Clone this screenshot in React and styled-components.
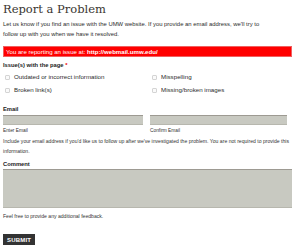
import styled, { createGlobalStyle } from "styled-components";

const Global = createGlobalStyle`
  html, body { margin: 0; padding: 0; background: #fff; }
  body { font-family: "Liberation Sans", Arial, sans-serif; color: #333; }
`;

const Page = styled.div`
  width: 300px;
  height: 247px;
  box-sizing: border-box;
  padding: 2px 8px 0 3px;
  overflow: hidden;
`;

const Title = styled.h1`
  margin: 0;
  font-family: "DejaVu Serif", "Liberation Serif", serif;
  font-weight: normal;
  font-size: 11.5px;
  line-height: 15px;
  color: #3a3530;
`;

const Intro = styled.p`
  margin: 2px 0 0;
  font-size: 5.9px;
  line-height: 10px;
  color: #2b2b2b;
`;

const Alert = styled.div`
  margin-top: 7px;
  height: 11px;
  box-sizing: border-box;
  background: #ff0000;
  border: 1px solid #f06060;
  color: #fff;
  font-size: 6.1px;
  line-height: 9px;
  padding-left: 2px;
  b { font-weight: bold; }
`;

const Label = styled.div`
  font-size: 5.8px;
  font-weight: bold;
  line-height: 8px;
  color: #222;
  margin-top: ${(p) => p.$top}px;
  span { color: #e00; }
`;

const Checks = styled.div`
  display: grid;
  grid-template-columns: 147px 1fr;
  row-gap: 5px;
  margin-top: 4px;
`;

const Check = styled.label`
  display: flex;
  align-items: center;
  gap: 4px;
  font-size: 6.2px;
  line-height: 8px;
  color: #2b2b2b;
  padding-left: 2px;
`;

const Box = styled.span`
  width: 5px;
  height: 5px;
  box-sizing: border-box;
  border: 1px solid #d4d4d4;
  border-radius: 1px;
  background: #fafafa;
`;

const Row = styled.div`
  display: grid;
  grid-template-columns: 140px 137px;
  column-gap: 7px;
  margin-top: 2px;
`;

const Field = styled.div`
  display: flex;
  flex-direction: column;
`;

const Input = styled.div`
  height: 10px;
  box-sizing: border-box;
  background: #c8c9c1;
  border-top: 1px solid #9d9a92;
  border-bottom: 1px solid #b7b7ae;
`;

const Area = styled.div`
  margin-top: 1px;
  height: 39px;
  width: 289px;
  box-sizing: border-box;
  background: #c8c9c1;
  border-top: 1px solid #9d9a92;
  border-bottom: 1px solid #b7b7ae;
`;

const Hint = styled.div`
  font-size: 4.8px;
  line-height: 8px;
  margin-top: 2px;
  color: #333;
`;

const Note = styled.p`
  margin: ${(p) => p.$top}px 0 0;
  font-size: 5.1px;
  line-height: 10px;
  color: #333;
`;

const Submit = styled.button`
  display: block;
  margin-top: 13px;
  background: #333;
  color: #fff;
  border: 0;
  padding: 0 4px;
  height: 11px;
  font-family: "Liberation Sans", Arial, sans-serif;
  font-weight: bold;
  font-size: 6px;
  letter-spacing: 0.2px;
`;

export default function App() {
  return (
    <Page>
      <Global />
      <Title>Report a Problem</Title>
      <Intro>
        Let us know if you find an issue with the UMW website. If you provide an email address, we'll try to
        <br />
        follow up with you when we have it resolved.
      </Intro>
      <Alert>
        You are reporting an issue at: <b>http://webmail.umw.edu/</b>
      </Alert>
      <Label $top={4}>
        Issue(s) with the page <span>*</span>
      </Label>
      <Checks>
        <Check><Box />Outdated or incorrect information</Check>
        <Check><Box />Misspelling</Check>
        <Check><Box />Broken link(s)</Check>
        <Check><Box />Missing/broken images</Check>
      </Checks>
      <Label $top={11}>Email</Label>
      <Row>
        <Field>
          <Input />
          <Hint>Enter Email</Hint>
        </Field>
        <Field>
          <Input />
          <Hint>Confirm Email</Hint>
        </Field>
      </Row>
      <Note $top={1}>
        Include your email address if you'd like us to follow up after we've investigated the problem. You are not required to provide this
        <br />
        information.
      </Note>
      <Label $top={4}>Comment</Label>
      <Area />
      <Note $top={3}>Feel free to provide any additional feedback.</Note>
      <Submit>SUBMIT</Submit>
    </Page>
  );
}
